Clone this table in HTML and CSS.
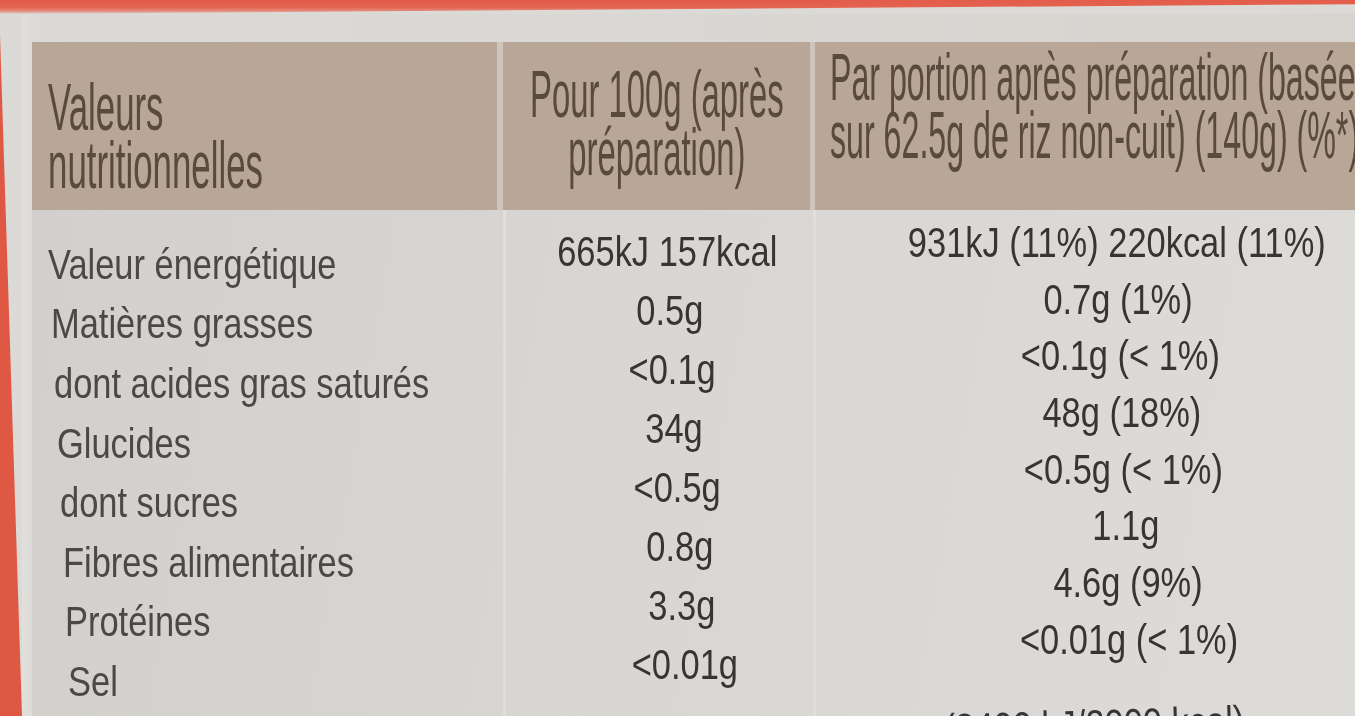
FILE: index.html
```html
<!DOCTYPE html>
<html lang="fr">
<head>
<meta charset="utf-8">
<title>Valeurs nutritionnelles</title>
<link rel="stylesheet" href="styles.css">
</head>
<body>
<div class="page">
  <div class="band"></div>
  <div class="main">
    <div class="wedge"></div>
    <div class="sheet">
      <div class="head">
        <div class="hcell h1"><span class="ht">Valeurs<br>nutritionnelles</span></div>
        <div class="hcell h2"><span class="ht">Pour 100g (après<br>préparation)</span></div>
        <div class="hcell h3"><span class="ht">Par portion après préparation (basée<br>sur 62.5g de riz non-cuit) (140g) (%*)</span></div>
      </div>
      <div class="body">
        <div class="col c1">
          <div class="cell"><span class="t">Valeur énergétique</span></div>
          <div class="cell"><span class="t">Matières grasses</span></div>
          <div class="cell"><span class="t">dont acides gras saturés</span></div>
          <div class="cell"><span class="t">Glucides</span></div>
          <div class="cell"><span class="t">dont sucres</span></div>
          <div class="cell"><span class="t">Fibres alimentaires</span></div>
          <div class="cell"><span class="t">Protéines</span></div>
          <div class="cell"><span class="t">Sel</span></div>
        </div>
        <div class="col c2">
          <div class="cell"><span class="t">665kJ 157kcal</span></div>
          <div class="cell"><span class="t">0.5g</span></div>
          <div class="cell"><span class="t">&lt;0.1g</span></div>
          <div class="cell"><span class="t">34g</span></div>
          <div class="cell"><span class="t">&lt;0.5g</span></div>
          <div class="cell"><span class="t">0.8g</span></div>
          <div class="cell"><span class="t">3.3g</span></div>
          <div class="cell"><span class="t">&lt;0.01g</span></div>
        </div>
        <div class="col c3">
          <div class="cell"><span class="t">931kJ (11%) 220kcal (11%)</span></div>
          <div class="cell"><span class="t">0.7g (1%)</span></div>
          <div class="cell"><span class="t">&lt;0.1g (&lt; 1%)</span></div>
          <div class="cell"><span class="t">48g (18%)</span></div>
          <div class="cell"><span class="t">&lt;0.5g (&lt; 1%)</span></div>
          <div class="cell"><span class="t">1.1g</span></div>
          <div class="cell"><span class="t">4.6g (9%)</span></div>
          <div class="cell"><span class="t">&lt;0.01g (&lt; 1%)</span></div>
          <div class="foot"><span class="t">*Apport de référence pour un adulte-type (8400 kJ/2000 kcal)</span></div>
        </div>
      </div>
    </div>
  </div>
</div>
</body>
</html>
```
FILE: styles.css
```css
html, body {
  margin: 0;
  height: 716px;
  overflow: hidden;
}
body {
  background: #d8d5d1;
  font-family: "Liberation Sans", Arial, sans-serif;
}
.page {
  width: 1355px;
  height: 716px;
  display: flex;
  flex-direction: column;
  overflow: hidden;
  filter: blur(0.6px);
  background: #dcdad6;
}
.band {
  flex: none;
  height: 14px;
  background: linear-gradient(to bottom, #e25d4b 0, #e4624f 7px, #e58a7c 11px, #dcd6d2 14px);
  clip-path: polygon(0 0, 100% 0, 100% 30%, 0 100%);
}
.main {
  flex: 1;
  display: flex;
  min-height: 0;
  background: #dcdad6;
}
.wedge {
  flex: none;
  width: 22px;
  background: #df5843;
  clip-path: polygon(0 3%, 100% 100%, 0 100%);
}
.sheet {
  flex: 1;
  min-width: 0;
  display: flex;
  flex-direction: column;
  padding: 28px 0 0 10px;
  background: linear-gradient(to right, #e2e0dd 0, #dcdad6 14px, #d7d4d0 100%);
}
.head {
  display: grid;
  grid-template-columns: 465px 313px 605px;
  width: 1383px;
  height: 168px;
  flex: none;
}
.hcell {
  display: flex;
  align-items: flex-start;
  background: #b8a696;
  color: #594a3e;
  font-size: 67px;
  line-height: 58px;
}
.h1 {
  padding: 36px 0 0 16px;
}
.h2 {
  border-left: 6px solid #cdc4ba;
  justify-content: center;
  padding-top: 23px;
}
.h3 {
  border-left: 5px solid #cdc4ba;
  padding: 6px 0 0 15px;
}
.ht {
  display: inline-block;
  white-space: nowrap;
  transform-origin: left top;
}
.h1 .ht { transform: scaleX(0.52); }
.h2 .ht { transform: scaleX(0.49); transform-origin: center top; text-align: center; }
.h3 .ht { transform: scaleX(0.48); }

.body {
  flex: 1;
  display: grid;
  grid-template-columns: 471px 310px 604px;
  width: 1385px;
  background: linear-gradient(100deg, #d2cfcc 0, #d8d6d3 40%, #dddcd9 100%);
}
.col {
  display: flex;
  flex-direction: column;
  font-size: 42px;
}
.c1 {
  padding-top: 25px;
  color: #4a4848;
}
.c2 {
  border-left: 3px solid #e0dedb;
  padding-top: 12.5px;
  color: #363434;
}
.c3 {
  border-left: 3px solid #e0dedb;
  padding-top: 4.6px;
  color: #363434;
}
.cell {
  flex: none;
  display: flex;
  align-items: center;
}
.cell:nth-child(1) { --r: 0; }
.cell:nth-child(2) { --r: 1; }
.cell:nth-child(3) { --r: 2; }
.cell:nth-child(4) { --r: 3; }
.cell:nth-child(5) { --r: 4; }
.cell:nth-child(6) { --r: 5; }
.cell:nth-child(7) { --r: 6; }
.cell:nth-child(8) { --r: 7; }

.c1 .cell {
  height: 59.6px;
  padding-left: calc(16px + var(--r) * 2.9px);
}
.c2 .cell {
  height: 59px;
  justify-content: center;
  padding-left: calc(15px + var(--r) * 5px);
}
.c3 .cell {
  height: 56.7px;
  justify-content: center;
  padding-left: calc(var(--r) * 3.7px);
}
.t {
  display: inline-block;
  white-space: nowrap;
  line-height: 1;
  transform: scaleX(0.82);
}
.c1 .t {
  transform-origin: left center;
}
.foot {
  flex: none;
  display: flex;
  justify-content: flex-end;
  margin-top: 32px;
  padding-right: 173px;
}
.foot .t {
  transform: rotate(-1.6deg) scaleX(0.82);
  transform-origin: right center;
}
```
